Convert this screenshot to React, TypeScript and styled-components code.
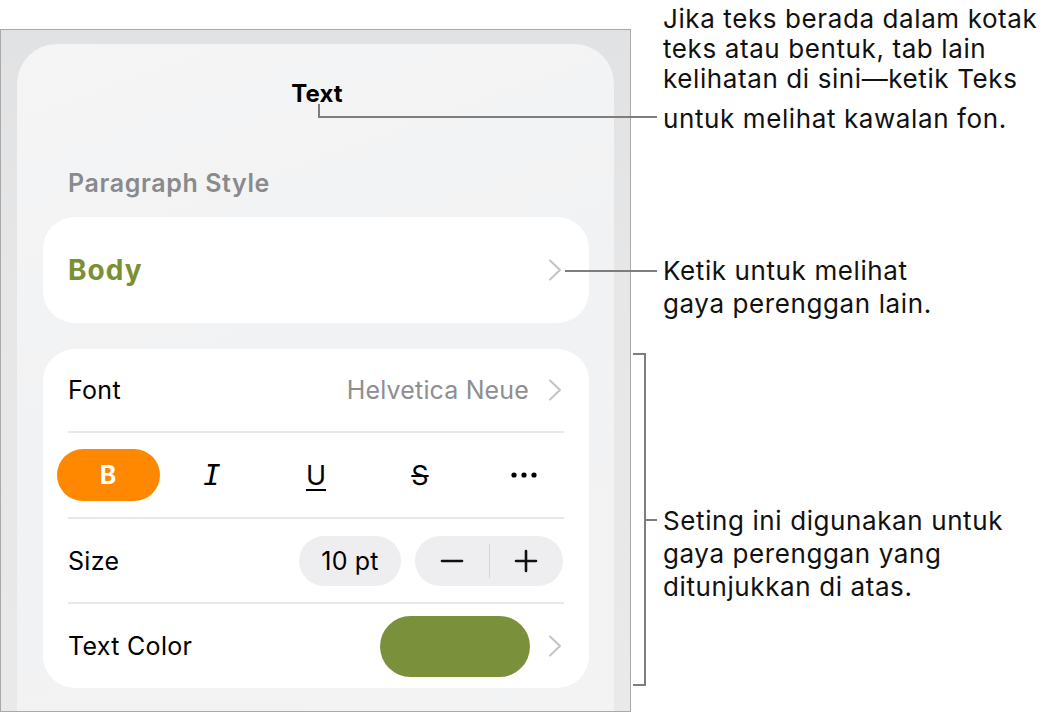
import React from "react";
import styled, { createGlobalStyle } from "styled-components";

const GlobalStyle = createGlobalStyle`
  html, body { margin: 0; padding: 0; background: #ffffff; }
  body { font-family: Inter, "Noto Sans", "Liberation Sans", sans-serif; color: #000; }
  * { box-sizing: border-box; }
`;

const Page = styled.div`
  position: relative;
  width: 1053px;
  height: 713px;
  display: flex;
  align-items: flex-start;
  overflow: hidden;
`;

const Frame = styled.div`
  margin-top: 29px;
  width: 631px;
  height: 683px;
  border: 1px solid #a9a9a9;
  background: linear-gradient(180deg, #e1e2e3 0%, #e7e7e8 40%, #e9e9e9 100%);
  padding: 14px 16px 0 16px;
  display: flex;
`;

const Sheet = styled.div`
  flex: 1;
  border-radius: 40px 40px 0 0;
  background: linear-gradient(160deg, #f5f5f6 0%, #f1f2f3 50%, #f3f3f4 100%);
  padding: 0 25px 0 26px;
  display: flex;
  flex-direction: column;
`;

const Title = styled.div`
  margin-top: 36px;
  height: 28px;
  line-height: 28px;
  text-align: center;
  font-size: 24px;
  font-weight: 700;
  letter-spacing: 0.1px;
  padding-left: 2px;
`;

const SectionLabel = styled.div`
  margin-top: 61px;
  height: 28px;
  line-height: 28px;
  padding-left: 25px;
  font-size: 25px;
  font-weight: 600;
  color: #8a8a8e;
  letter-spacing: 0.6px;
`;

const Card = styled.div<{ $top: number; $height: number }>`
  margin-top: ${(p) => p.$top}px;
  height: ${(p) => p.$height}px;
  background: #ffffff;
  border-radius: 32px;
  padding: 0 25px;
  display: flex;
  flex-direction: column;
`;

const Row = styled.div<{ $h: number; $last?: boolean }>`
  height: ${(p) => p.$h}px;
  flex: none;
  display: flex;
  align-items: center;
  border-bottom: ${(p) => (p.$last ? "none" : "2px solid #e8e8ea")};
`;

const BodyRow = styled.div`
  flex: 1;
  display: flex;
  align-items: center;
`;

const StyleName = styled.div`
  flex: 1;
  font-size: 28px;
  font-weight: 700;
  color: #7b9034;
  letter-spacing: 1px;
`;

const Label = styled.div`
  flex: 1;
  font-size: 25px;
  font-weight: 400;
  color: #000;
  letter-spacing: 0.3px;
`;

const Value = styled.div`
  font-size: 25px;
  color: #8e8e93;
  margin-right: 19px;
  letter-spacing: 0.15px;
`;

const StyleGrid = styled.div`
  flex: 1;
  margin: 0 -12px;
  display: grid;
  grid-template-columns: repeat(5, 1fr);
  align-items: center;
`;

const StyleBtn = styled.div<{ $active?: boolean }>`
  height: 52px;
  width: 103px;
  justify-self: center;
  border-radius: 26px;
  background: ${(p) => (p.$active ? "#ff8800" : "transparent")};
  color: ${(p) => (p.$active ? "#ffffff" : "#000000")};
  display: flex;
  align-items: center;
  justify-content: center;
`;

const BoldGlyph = styled.span`
  font-weight: 700;
  font-size: 25px;
`;

const ItalicGlyph = styled.span`
  font-family: "DejaVu Sans Mono", monospace;
  font-style: italic;
  font-size: 29px;
`;

const UnderGlyph = styled.span`
  font-size: 27px;
  text-decoration: underline;
  text-decoration-thickness: 2px;
  text-underline-offset: 4px;
`;

const StrikeGlyph = styled.span`
  font-size: 27px;
  text-decoration: line-through;
  text-decoration-thickness: 2px;
`;

const Pill = styled.div`
  height: 50px;
  width: 102px;
  border-radius: 25px;
  background: #eeeef0;
  display: flex;
  align-items: center;
  justify-content: center;
  font-size: 25px;
  margin-right: 14px;
  letter-spacing: 0.2px;
`;

const Stepper = styled.div`
  height: 50px;
  width: 148px;
  margin-right: 1px;
  border-radius: 25px;
  background: #eeeef0;
  display: grid;
  grid-template-columns: 1fr 1px 1fr;
  align-items: center;
`;

const StepHalf = styled.div`
  display: flex;
  align-items: center;
  justify-content: center;
`;

const StepDivider = styled.div`
  height: 34px;
  background: #d6d6d9;
`;

const Swatch = styled.div`
  width: 150px;
  height: 61px;
  border-radius: 31px;
  margin-right: 18px;
  background: #7b903a;
`;

const ChevronSvg = styled.svg`
  flex: none;
  margin-right: 2px;
`;

const Chevron = () => (
  <ChevronSvg width="14" height="22" viewBox="0 0 14 22">
    <path d="M2 1.5 L12 11 L2 20.5" fill="none" stroke="#c4c4c7" strokeWidth="2" strokeLinecap="round" strokeLinejoin="round" />
  </ChevronSvg>
);

const Callouts = styled.div`
  margin-left: 32px;
  display: flex;
  flex-direction: column;
`;

const Note = styled.div<{ $top: number; $lh: number }>`
  margin-top: ${(p) => p.$top}px;
  font-size: 26px;
  line-height: ${(p) => p.$lh}px;
  color: #111;
  white-space: nowrap;
  letter-spacing: 0.6px;
`;

const NoteLine = styled.div<{ $gap?: number }>`
  margin-top: ${(p) => p.$gap ?? 0}px;
`;

const Leaders = styled.svg`
  position: absolute;
  left: 0;
  top: 0;
  pointer-events: none;
`;

export default function App() {
  return (
    <>
      <GlobalStyle />
      <Page>
        <Frame>
          <Sheet>
            <Title>Text</Title>
            <SectionLabel>Paragraph Style</SectionLabel>
            <Card $top={20} $height={106}>
              <BodyRow>
                <StyleName>Body</StyleName>
                <Chevron />
              </BodyRow>
            </Card>
            <Card $top={26} $height={339}>
              <Row $h={84}>
                <Label>Font</Label>
                <Value>Helvetica Neue</Value>
                <Chevron />
              </Row>
              <Row $h={86}>
                <StyleGrid>
                  <StyleBtn $active>
                    <BoldGlyph>B</BoldGlyph>
                  </StyleBtn>
                  <StyleBtn>
                    <ItalicGlyph>I</ItalicGlyph>
                  </StyleBtn>
                  <StyleBtn>
                    <UnderGlyph>U</UnderGlyph>
                  </StyleBtn>
                  <StyleBtn>
                    <StrikeGlyph>S</StrikeGlyph>
                  </StyleBtn>
                  <StyleBtn>
                    <svg width="26" height="6" viewBox="0 0 26 6">
                      <circle cx="3" cy="3" r="2.6" fill="#000" />
                      <circle cx="13" cy="3" r="2.6" fill="#000" />
                      <circle cx="23" cy="3" r="2.6" fill="#000" />
                    </svg>
                  </StyleBtn>
                </StyleGrid>
              </Row>
              <Row $h={85}>
                <Label>Size</Label>
                <Pill>10 pt</Pill>
                <Stepper>
                  <StepHalf>
                    <svg width="24" height="24" viewBox="0 0 24 24">
                      <path d="M2 12 H22" stroke="#111" strokeWidth="2.6" strokeLinecap="round" />
                    </svg>
                  </StepHalf>
                  <StepDivider />
                  <StepHalf>
                    <svg width="24" height="24" viewBox="0 0 24 24">
                      <path d="M2 12 H22 M12 2 V22" stroke="#111" strokeWidth="2.6" strokeLinecap="round" />
                    </svg>
                  </StepHalf>
                </Stepper>
              </Row>
              <Row $h={84} $last>
                <Label>Text Color</Label>
                <Swatch />
                <Chevron />
              </Row>
            </Card>
          </Sheet>
        </Frame>
        <Callouts>
          <Note $top={4} $lh={30}>
            <NoteLine>Jika teks berada dalam kotak</NoteLine>
            <NoteLine>teks atau bentuk, tab lain</NoteLine>
            <NoteLine>kelihatan di sini—ketik Teks</NoteLine>
            <NoteLine $gap={10}>untuk melihat kawalan fon.</NoteLine>
          </Note>
          <Note $top={120} $lh={33}>
            <NoteLine>Ketik untuk melihat</NoteLine>
            <NoteLine>gaya perenggan lain.</NoteLine>
          </Note>
          <Note $top={184} $lh={33}>
            <NoteLine>Seting ini digunakan untuk</NoteLine>
            <NoteLine>gaya perenggan yang</NoteLine>
            <NoteLine>ditunjukkan di atas.</NoteLine>
          </Note>
        </Callouts>
        <Leaders width="1053" height="713" viewBox="0 0 1053 713">
          <g fill="none" stroke="#7d7d7d" strokeWidth="2">
            <path d="M319 104 V117 H657" />
            <path d="M565 271 H657" />
            <path d="M633 354 H645 V685 H633" />
            <path d="M645 520 H657" />
          </g>
        </Leaders>
      </Page>
    </>
  );
}
